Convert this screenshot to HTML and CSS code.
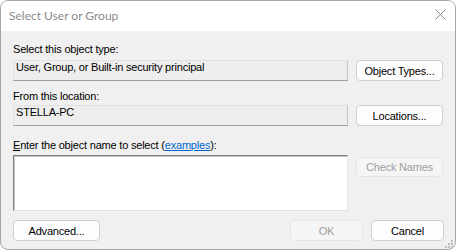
FILE: index.html
```html
<!DOCTYPE html>
<html lang="en">
<head>
  <meta charset="UTF-8">
  <title>Select User or Group</title>
  <link rel="stylesheet" href="styles.css">
</head>
<body>
  <div class="window">
    <div class="title-bar">
      <span class="title">Select User or Group</span>
      <svg class="close-icon" width="11" height="11" viewBox="0 0 11 11">
        <path d="M0.5 0.5 L10.5 10.5 M10.5 0.5 L0.5 10.5" stroke="#8c8c8c" stroke-width="1" fill="none"/>
      </svg>
    </div>

    <div class="dialog">
      <div class="form-grid">
        <div class="label label-first">Select this object type:</div>
        <div class="field">User, Group, or Built-in security principal</div>
        <button class="btn">Object Types...</button>

        <div class="label label-second">From this location:</div>
        <div class="field">STELLA-PC</div>
        <button class="btn">Locations...</button>

        <div class="label label-third"><u>E</u>nter the object name to select (<a href="#" class="link">examples</a>):</div>
        <div class="name-box"></div>
        <button class="btn btn-check" disabled>Check Names</button>
      </div>

      <div class="footer">
        <button class="btn">Advanced...</button>
        <div class="footer-right">
          <button class="btn btn-small" disabled>OK</button>
          <button class="btn btn-small">Cancel</button>
        </div>
      </div>
    </div>

    <svg class="grip" width="8" height="8" viewBox="0 0 8 8">
      <rect x="6" y="0" width="2" height="2" fill="#bdbdbd"/>
      <rect x="3" y="3" width="2" height="2" fill="#bdbdbd"/>
      <rect x="6" y="3" width="2" height="2" fill="#bdbdbd"/>
      <rect x="0" y="6" width="2" height="2" fill="#bdbdbd"/>
      <rect x="3" y="6" width="2" height="2" fill="#bdbdbd"/>
      <rect x="6" y="6" width="2" height="2" fill="#bdbdbd"/>
    </svg>
  </div>
</body>
</html>
```

FILE: styles.css
```css
body{
  margin: 0;
  background-color: white;
  font-family: "Liberation Sans", Arial, sans-serif;
  font-size: 11px;
  letter-spacing: -0.2px;
  color: black;
}
.window{
  position: relative;
  width: 456px;
  height: 250px;
  box-sizing: border-box;
  border: 1px solid #a6a6a6;
  border-radius: 8px;
  overflow: hidden;
  background-color: #f0f0f0;
  display: flex;
  flex-direction: column;
}
.title-bar{
  height: 30px;
  background-color: white;
  display: flex;
  align-items: center;
  justify-content: space-between;
  padding: 0 9px 0 8px;
}
.title{
  font-family: Lato, "Noto Sans", sans-serif;
  font-size: 12px;
  letter-spacing: 0;
  color: #8a8a8a;
  padding-bottom: 1px;
}
.close-icon{
  margin-bottom: 3px;
}
.dialog{
  padding: 12px 11px 0 12px;
}
.form-grid{
  display: grid;
  grid-template-columns: 335px 87px;
  column-gap: 8px;
  align-items: start;
}
.label{
  grid-column: 1 / 3;
  line-height: 13px;
}
.label-first{
  margin-bottom: 4px;
}
.label-second{
  margin-top: 9px;
  margin-bottom: 2px;
}
.label-third{
  margin-top: 13px;
  margin-bottom: 3px;
}
.link{
  color: #0066cc;
}
.field{
  height: 21px;
  box-sizing: border-box;
  line-height: 13px;
  padding: 0 2px;
  background-color: #eeeeee;
  border: 1px solid #e2e2e2;
  border-bottom-color: #a0a0a0;
  border-right-color: #c6c6c6;
}
.name-box{
  height: 56px;
  box-sizing: border-box;
  background-color: white;
  border: 1px solid #e3e3e3;
  border-top-color: #7e7e7e;
  border-left-color: #7e7e7e;
  box-shadow: inset 1px 1px 0 #c4c4c4;
}
.btn{
  height: 21px;
  box-sizing: border-box;
  font-family: "Liberation Sans", Arial, sans-serif;
  font-size: 11px;
  letter-spacing: -0.2px;
  color: black;
  background-color: #fdfdfd;
  border: 1px solid #d0d0d0;
  border-radius: 4px;
  padding: 0;
  width: 87px;
}
.btn:disabled{
  background-color: #f5f5f5;
  border-color: #e6e6e6;
  color: #a0a0a0;
}
.btn-check{
  margin-top: 2px;
  height: 20px;
}
.btn-small{
  width: 73px;
}
.footer{
  display: flex;
  justify-content: space-between;
  margin-top: 9px;
}
.footer-right{
  display: flex;
  gap: 8px;
}
.grip{
  position: absolute;
  right: 2px;
  bottom: 1px;
}
```
